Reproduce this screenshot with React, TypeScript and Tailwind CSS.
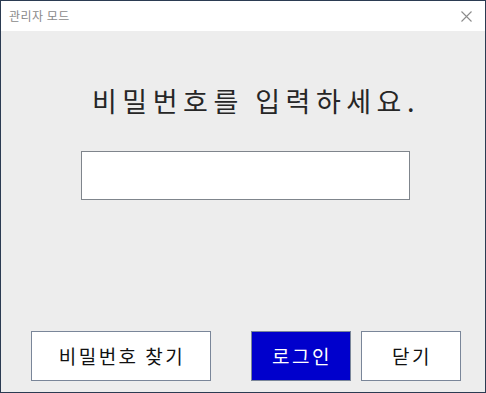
import React from "react";

const font = { fontFamily: '"Noto Sans CJK KR", "Noto Sans", sans-serif' };

function App() {
  return (
    <div
      className="w-[486px] h-[393px] border border-[#2b3b52] bg-[#ededed] flex flex-col"
      style={font}
    >
      <div className="h-[30px] bg-white flex items-center justify-between pl-[8px] pr-[13px]">
        <span className="text-[12px] text-[#8a8a8a] tracking-[0.5px]">관리자 모드</span>
        <svg width="11" height="11" viewBox="0 0 11 11" className="text-[#8c8c8c]">
          <path d="M0.5 0.5 L10.5 10.5 M10.5 0.5 L0.5 10.5" stroke="currentColor" strokeWidth="1.1" />
        </svg>
      </div>
      <div className="flex-1 flex flex-col items-center pl-[4px]">
        <h1 className="mt-[53px] text-[27px] leading-[34px] tracking-[5.5px] text-[#262626] font-normal pl-[22px]">
          비밀번호를 입력하세요.
        </h1>
        <input
          type="password"
          className="mt-[33px] w-[329px] h-[49px] bg-white border border-[#7f858c] outline-none"
        />
        <div className="mt-auto mb-[11px] w-full flex items-center pl-[26px] pr-[24px]">
          <button className="w-[180px] h-[50px] bg-white border border-[#7a8699] text-[19px] text-[#111] tracking-[2.5px] pl-[2px]">
            비밀번호 찾기
          </button>
          <button className="ml-[40px] w-[100px] h-[50px] bg-[#0000cc] border border-[#7a8699] text-[19px] text-white tracking-[2.5px] pl-[2px]">
            로그인
          </button>
          <button className="ml-[10px] w-[100px] h-[50px] bg-white border border-[#7a8699] text-[19px] text-[#111] tracking-[2.5px] pl-[2px]">
            닫기
          </button>
        </div>
      </div>
    </div>
  );
}

export default App;
